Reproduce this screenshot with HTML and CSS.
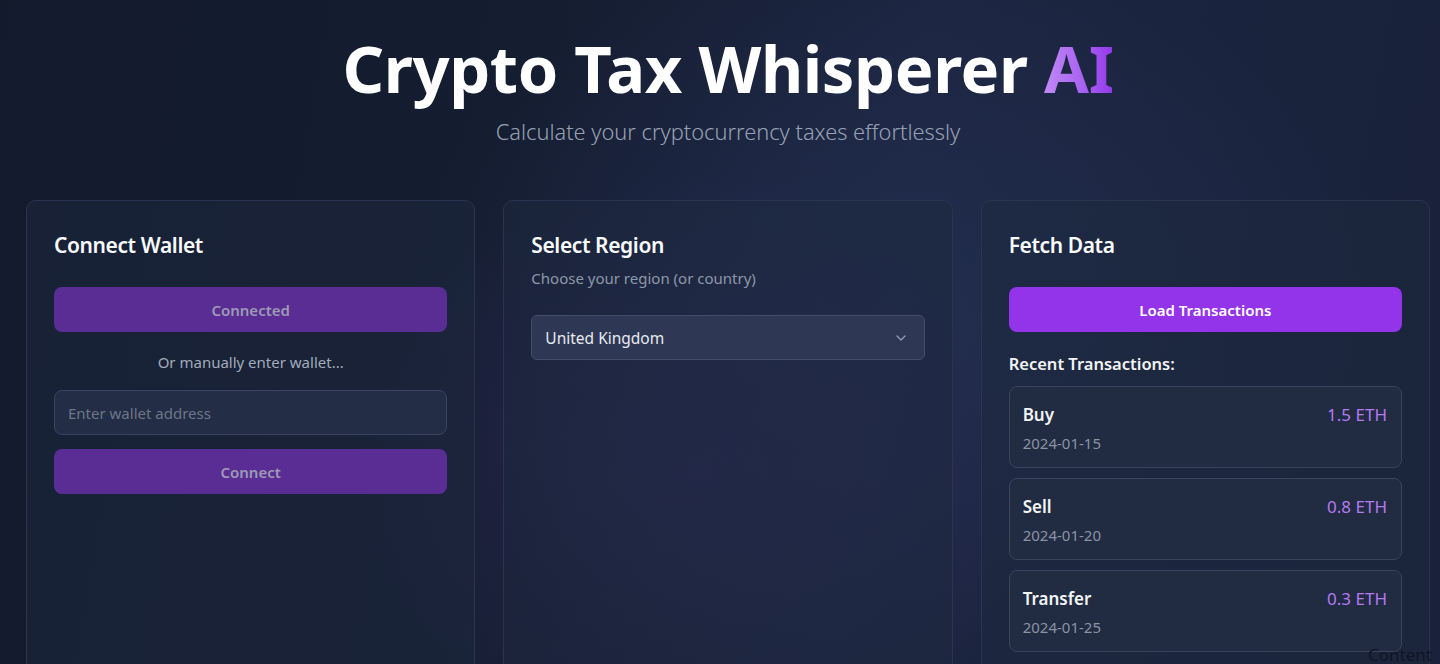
FILE: index.html
```html
<!DOCTYPE html>
<html lang="en">
<head>
<meta charset="utf-8">
<title>Crypto Tax Whisperer AI</title>
<link rel="stylesheet" href="styles.css">
</head>
<body>
<div class="page">
  <header class="hero">
    <h1 class="title">Crypto Tax Whisperer <span class="ai">AI</span></h1>
    <p class="subtitle">Calculate your cryptocurrency taxes effortlessly</p>
  </header>
  <main class="grid">
    <section class="card">
      <h2 class="card-title">Connect Wallet</h2>
      <div class="stack">
        <button class="btn btn-dim">Connected</button>
        <p class="or">Or manually enter wallet...</p>
        <input class="input" type="text" placeholder="Enter wallet address">
        <button class="btn btn-dim">Connect</button>
      </div>
    </section>
    <section class="card">
      <h2 class="card-title">Select Region</h2>
      <p class="card-desc">Choose your region (or country)</p>
      <div class="select">
        <span>United Kingdom</span>
        <svg class="chev" width="16" height="16" viewBox="0 0 24 24" fill="none" stroke="currentColor" stroke-width="1.8" stroke-linecap="round" stroke-linejoin="round"><path d="M6 9l6 6 6-6"/></svg>
      </div>
    </section>
    <section class="card">
      <h2 class="card-title">Fetch Data</h2>
      <button class="btn btn-primary">Load Transactions</button>
      <h3 class="recent">Recent Transactions:</h3>
      <ul class="tx-list">
        <li class="tx">
          <div class="tx-row"><span class="tx-type">Buy</span><span class="tx-amt">1.5 ETH</span></div>
          <div class="tx-date">2024-01-15</div>
        </li>
        <li class="tx">
          <div class="tx-row"><span class="tx-type">Sell</span><span class="tx-amt">0.8 ETH</span></div>
          <div class="tx-date">2024-01-20</div>
        </li>
        <li class="tx">
          <div class="tx-row"><span class="tx-type">Transfer</span><span class="tx-amt">0.3 ETH</span></div>
          <div class="tx-date">2024-01-25</div>
        </li>
      </ul>
    </section>
  </main>
  <div class="ghost">Content</div>
</div>
</body>
</html>
```

FILE: styles.css
```css
* { box-sizing: border-box; }
html, body { margin: 0; padding: 0; height: 100%; overflow: hidden; }
body {
  font-family: "Noto Sans", "Open Sans", "Liberation Sans", sans-serif;
  color: #f3f4f6;
  background:
    radial-gradient(ellipse 520px 420px at 700px 470px, rgba(62, 48, 112, 0.38), transparent 70%),
    radial-gradient(ellipse 700px 500px at 900px 300px, rgba(40, 55, 95, 0.45), transparent 70%),
    linear-gradient(100deg, #121a2c 0%, #151d31 35%, #1c2540 60%, #19223a 100%);
}
.page {
  position: relative;
  height: 664px;
  overflow: hidden;
  padding: 0 10px 0 26px;
}
.hero {
  text-align: center;
  padding-top: 27px;
}
.title {
  margin: 0;
  font-size: 65px;
  line-height: 82px;
  font-weight: 700;
  color: #ffffff;
  letter-spacing: -0.4px;
}
.ai {
  background: linear-gradient(90deg, #c08af7 0%, #a862f0 55%, #9337ea 100%);
  -webkit-background-clip: text;
  background-clip: text;
  color: transparent;
}
.subtitle {
  margin: 9px 0 0;
  font-size: 21.8px;
  line-height: 28px;
  font-weight: 300;
  color: #98a1b4;
}
.grid {
  margin-top: 54px;
  display: grid;
  grid-template-columns: repeat(3, 1fr);
  gap: 28px;
}
.card {
  height: 520px;
  padding: 27px 27px;
  border: 1px solid #2a3450;
  border-radius: 10px;
  background: rgba(30, 40, 62, 0.55);
}
.card-title {
  margin: 0;
  font-size: 21px;
  line-height: 34px;
  font-weight: 600;
  color: #f8fafc;
  letter-spacing: -0.4px;
}
.stack { margin-top: 25px; }
.btn {
  display: block;
  width: 100%;
  height: 45px;
  border: 0;
  border-radius: 8px;
  font-family: inherit;
  font-size: 15px;
  font-weight: 600;
}
.btn-dim {
  background: #5a2d95;
  color: #9c9ab4;
}
.btn-primary {
  margin-top: 25px;
  background: #9333ea;
  color: #ffffff;
}
.or {
  margin: 0;
  height: 58px;
  line-height: 60px;
  text-align: center;
  font-size: 15px;
  color: #a3abbb;
}
.input {
  display: block;
  width: 100%;
  height: 45px;
  padding: 0 13px;
  border: 1px solid #3a4460;
  border-radius: 8px;
  background: #232d45;
  font-family: inherit;
  font-size: 15px;
  color: #e5e7eb;
  margin-bottom: 14px;
}
.input::placeholder { color: #6d768a; }
.card-desc {
  margin: 5px 0 0;
  font-size: 15px;
  line-height: 22px;
  color: #8e97a9;
}
.select {
  margin-top: 26px;
  height: 45px;
  padding: 0 15px 0 13px;
  border: 1px solid #434d6a;
  border-radius: 6px;
  background: #2e3854;
  display: flex;
  align-items: center;
  justify-content: space-between;
  font-size: 15.5px;
  color: #e8eaf0;
}
.chev { color: #97a0b5; }
.recent {
  margin: 20px 0 0;
  font-size: 16.5px;
  line-height: 24px;
  font-weight: 600;
  color: #f3f4f6;
}
.tx-list {
  list-style: none;
  margin: 10px 0 0;
  padding: 0;
  display: flex;
  flex-direction: column;
  gap: 10px;
}
.tx {
  height: 82px;
  padding: 15px 14px 14px 13px;
  border: 1px solid #39435d;
  border-radius: 8px;
  background: #212b41;
}
.tx-row {
  display: flex;
  justify-content: space-between;
  align-items: baseline;
}
.tx-type {
  font-size: 17px;
  line-height: 26px;
  font-weight: 600;
  color: #f3f4f6;
}
.tx-amt {
  font-size: 17px;
  color: #b47af2;
}
.tx-date {
  margin-top: 5px;
  font-size: 15px;
  line-height: 20px;
  color: #8b93a6;
}
.ghost {
  position: absolute;
  right: 8px;
  top: 643px;
  font-size: 17px;
  line-height: 24px;
  color: #0f1526;
}
```
